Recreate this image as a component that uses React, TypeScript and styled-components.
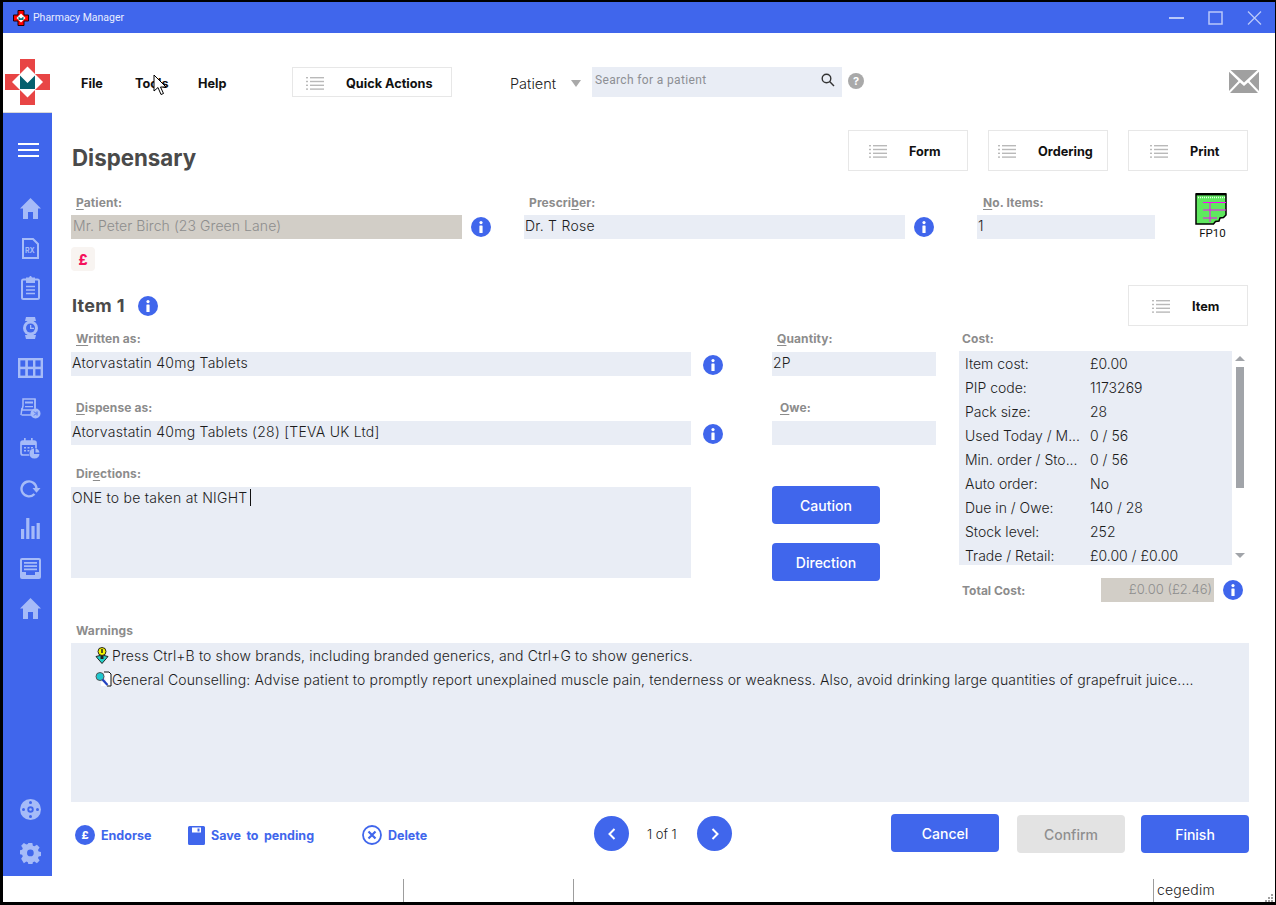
import * as React from 'react';
import styled, { createGlobalStyle } from 'styled-components';

const BLUE = '#4066ec';
const PALE = '#a6bbf8';
const FIELD = '#e9edf5';
const LOCKED = '#d2cec7';

const Global = createGlobalStyle`
  html, body { margin: 0; padding: 0; background: #000; }
  body { font-family: Inter, "Liberation Sans", sans-serif; color: #1a1a1a; }
  * { box-sizing: border-box; }
`;

const Frame = styled.div`
  position: relative;
  width: 1276px;
  height: 905px;
  padding: 2px 1px 3px 3px;
  background: #000;
  overflow: hidden;
`;
const Window = styled.div`
  display: flex;
  flex-direction: column;
  height: 100%;
  background: #fff;
`;
const TitleBar = styled.div`
  display: flex;
  align-items: center;
  height: 31px;
  padding-left: 10px;
  background: ${BLUE};
  flex: none;
`;
const TitleText = styled.span`
  margin-left: 4px;
  font: 10.5px Roboto, sans-serif;
  color: #e8edff;
`;
const WindowControls = styled.div`
  display: flex;
  align-items: center;
  gap: 24px;
  margin-left: auto;
  padding-right: 13px;
  color: #b9c8fa;
`;
const Body = styled.div`
  display: flex;
  flex: 1;
  min-height: 0;
`;
const Side = styled.div`
  display: flex;
  flex-direction: column;
  flex: none;
  width: 49px;
`;
const LogoCell = styled.div`
  display: flex;
  height: 80px;
  padding: 26px 0 0 2px;
  border-bottom: 1px solid #d8d8d8;
  flex: none;
`;
const Nav = styled.div`
  display: flex;
  flex: 1;
  flex-direction: column;
  align-items: center;
  padding: 28px 0 3px 5px;
  background: ${BLUE};
  color: ${PALE};
`;
const NavSlot = styled.div<{ $h?: number }>`
  display: flex;
  align-items: center;
  justify-content: center;
  height: ${p => p.$h ?? 40}px;
  width: 30px;
  flex: none;
`;
const MenuGlyphSlot = styled(NavSlot)`
  margin-left: -3px;
`;
const NavBottom = styled.div`
  display: flex;
  flex-direction: column;
  gap: 4px;
  margin-top: auto;
`;
const Main = styled.div`
  display: flex;
  flex: 1;
  flex-direction: column;
  min-width: 0;
`;
const MenuBar = styled.div`
  display: flex;
  align-items: flex-start;
  height: 80px;
  padding: 34px 16px 0 29px;
  flex: none;
`;
const MenuItem = styled.span<{ $w: number }>`
  width: ${p => p.$w}px;
  font-size: 12.7px;
  font-weight: 700;
  line-height: 34px;
  color: #111;
`;
const OptionButton = styled.div<{ $w: number; $h: number; $gap: number; $pad: number; $push?: boolean }>`
  display: flex;
  align-items: center;
  gap: ${p => p.$gap}px;
  width: ${p => p.$w}px;
  height: ${p => p.$h}px;
  margin-left: ${p => (p.$push ? 'auto' : '0')};
  padding: 2px 0 0 ${p => p.$pad}px;
  border: 1px solid #e7e7e7;
  background: #fff;
  font-size: 12.7px;
  font-weight: 700;
  color: #111;
  flex: none;
`;
const SearchType = styled.div`
  display: flex;
  align-items: center;
  width: 82px;
  height: 30px;
  margin-left: 58px;
  font-size: 14.5px;
  font-weight: 300;
  padding-top: 2px;
  color: #222;
`;
const Caret = styled.span`
  margin-left: 15px;
  border-left: 5px solid transparent;
  border-right: 5px solid transparent;
  border-top: 7px solid #a9a9a9;
`;
const SearchBox = styled.div`
  display: flex;
  justify-content: space-between;
  width: 250px;
  height: 30px;
  padding: 6px 7px 0 3px;
  background: ${FIELD};
  font: 12px Roboto, sans-serif;
  letter-spacing: 0.35px;
  color: #8d8f94;
`;
const HelpDot = styled.span`
  display: flex;
  align-items: center;
  justify-content: center;
  width: 16px;
  height: 16px;
  margin: 6px 0 0 6px;
  border-radius: 50%;
  background: #a9a9a9;
  color: #fff;
  font-size: 11px;
  font-weight: 700;
`;
const Mail = styled.div`
  display: flex;
  margin: 3px 0 0 auto;
`;
const Content = styled.div`
  display: flex;
  flex: 1;
  flex-direction: column;
  padding: 17px 26px 0 19px;
`;
const HeadRow = styled.div`
  display: flex;
  align-items: center;
  gap: 20px;
  margin-right: 1px;
`;
const PageTitle = styled.h1`
  margin: 14px auto 0 1px;
  font-size: 22.3px;
  font-weight: 700;
  line-height: 27px;
  color: #4a4a4a;
`;
const Row = styled.div<{ $mt?: number }>`
  display: flex;
  margin-top: ${p => p.$mt ?? 0}px;
`;
const Field = styled.div<{ $w: number; $ml?: number; $mt?: number }>`
  width: ${p => p.$w}px;
  margin-left: ${p => p.$ml ?? 0}px;
  margin-top: ${p => p.$mt ?? 0}px;
  flex: none;
`;
const Label = styled.div<{ $in?: number; $top?: number }>`
  height: 20px;
  padding: ${p => p.$top ?? 0}px 0 0 ${p => p.$in ?? 5}px;
  font-size: 12px;
  font-weight: 700;
  letter-spacing: 0.1px;
  line-height: 14px;
  color: #8c8c8c;
  u { text-underline-offset: 2px; }
`;
const Input = styled.div<{ $locked?: boolean; $h?: number }>`
  height: ${p => p.$h ?? 24}px;
  padding: 2px 2px 0 ${p => (p.$locked ? 2 : 1)}px;
  background: ${p => (p.$locked ? LOCKED : FIELD)};
  font-size: 14px;
  font-weight: 300;
  letter-spacing: ${p => (p.$locked ? 0.07 : 0.25)}px;
  line-height: 17px;
  color: ${p => (p.$locked ? '#8d8d8d' : '#1c1c1c')};
`;
const CaretMark = styled.span`
  display: inline-block;
  width: 1px;
  height: 17px;
  margin-left: 3px;
  background: #111;
  vertical-align: top;
`;
const Info = styled.span<{ $ml: number; $mt: number }>`
  display: flex;
  align-items: center;
  justify-content: center;
  width: 20px;
  height: 20px;
  margin: ${p => p.$mt}px 0 0 ${p => p.$ml}px;
  border-radius: 50%;
  background: ${BLUE};
  flex: none;
`;
const Form10 = styled.div`
  display: flex;
  flex-direction: column;
  align-items: center;
  width: 32px;
  height: 44px;
  margin: -2px 0 0 40px;
  font: 11.5px/13px Roboto, sans-serif;
  color: #111;
  gap: 2px;
  svg { flex: none; }
`;
const Form10Caption = styled.span`
  margin-left: 3px;
  flex: none;
`;
const Pound = styled.div`
  display: flex;
  align-items: center;
  justify-content: center;
  width: 24px;
  height: 24px;
  margin-top: 8px;
  border-radius: 4px;
  background: #f8f4f1;
  color: #f4115c;
  font-size: 14px;
  font-weight: 800;
`;
const ItemHead = styled.div`
  display: flex;
  align-items: center;
  margin: 14px 1px 0 0;
`;
const ItemTitle = styled.h2`
  margin: 0 0 0 1px;
  font-size: 18px;
  font-weight: 700;
  letter-spacing: 0.3px;
  color: #4a4a4a;
`;
const ItemGrid = styled.div`
  display: flex;
  margin-top: 6px;
`;
const LeftCol = styled.div`
  width: 652px;
  flex: none;
`;
const QtyCol = styled.div`
  width: 164px;
  margin-left: 49px;
  flex: none;
`;
const CostCol = styled.div`
  margin-left: 23px;
  flex: 1;
`;
const ActionButton = styled.button<{ $w: number; $off?: boolean }>`
  display: block;
  width: ${p => p.$w}px;
  height: 38px;
  padding: 0;
  border: 0;
  border-radius: 4px;
  background: ${p => (p.$off ? '#e3e3e3' : BLUE)};
  font-family: Inter, sans-serif;
  font-size: 14px;
  font-weight: 500;
  color: ${p => (p.$off ? '#8f8f8f' : '#fff')};
`;
const StackedActions = styled.div`
  display: flex;
  flex-direction: column;
  gap: 19px;
  margin-top: 41px;
`;
const CostBody = styled.div`
  display: flex;
  margin-top: -1px;
`;
const CostList = styled.div`
  width: 273px;
  height: 214px;
  padding: 1px 0 0 6px;
  background: ${FIELD};
  overflow: hidden;
  flex: none;
`;
const CostRow = styled.div`
  display: flex;
  height: 24px;
  font-size: 14px;
  font-weight: 300;
  line-height: 24px;
  color: #1c1c1c;
`;
const CostKey = styled.span`
  width: 125px;
  flex: none;
`;
const Scrollbar = styled.div`
  display: flex;
  flex-direction: column;
  align-items: center;
  width: 13px;
  margin-left: 1px;
  padding-top: 5px;
`;
const ArrowUp = styled.span`
  border-left: 5px solid transparent;
  border-right: 5px solid transparent;
  border-bottom: 5px solid #a1a4a9;
`;
const ArrowDown = styled.span`
  margin-top: 65px;
  border-left: 5px solid transparent;
  border-right: 5px solid transparent;
  border-top: 5px solid #a1a4a9;
`;
const Thumb = styled.span`
  width: 8px;
  height: 121px;
  margin-top: 6px;
  background: #a1a4a9;
`;
const TotalRow = styled.div`
  display: flex;
  margin-top: 13px;
`;
const TotalLabel = styled.div`
  width: 142px;
  padding: 5px 0 0 3px;
  font-size: 12px;
  font-weight: 700;
  color: #8c8c8c;
`;
const TotalValue = styled.div`
  width: 113px;
  height: 24px;
  padding-right: 2px;
  background: ${LOCKED};
  font-size: 13px;
  font-weight: 300;
  line-height: 23px;
  text-align: right;
  color: #8d8d8d;
`;
const WarningsBlock = styled.div`
  margin-top: 22px;
`;
const WarningsBox = styled.div`
  height: 159px;
  margin-top: -1px;
  padding-left: 21px;
  background: ${FIELD};
`;
const WarningRow = styled.div`
  display: flex;
  align-items: center;
  height: 24px;
  font-size: 14px;
  font-weight: 300;
  letter-spacing: 0.14px;
  color: #1c1c1c;
  white-space: nowrap;
`;
const WarningIcon = styled.span`
  display: flex;
  justify-content: flex-end;
  width: 20px;
  flex: none;
`;
const FooterBar = styled.div`
  display: flex;
  align-items: flex-start;
  margin-top: 12px;
`;
const LinkAction = styled.div<{ $w: number; $ml: number }>`
  display: flex;
  align-items: center;
  gap: 6px;
  width: ${p => p.$w}px;
  height: 20px;
  margin: 11px 0 0 ${p => p.$ml}px;
  font-size: 12.5px;
  font-weight: 700;
  word-spacing: 2.5px;
  color: ${BLUE};
  flex: none;
`;
const Pager = styled.div`
  display: flex;
  align-items: center;
  gap: 18px;
  width: 138px;
  margin: 2px 0 0 0;
  font-size: 13px;
  font-weight: 300;
  flex: none;
`;
const PagerDot = styled.span`
  display: flex;
  align-items: center;
  justify-content: center;
  width: 35px;
  height: 35px;
  border-radius: 50%;
  background: ${BLUE};
  flex: none;
`;
const PagerText = styled.span`
  width: 32px;
  white-space: nowrap;
`;
const FooterButtons = styled.div`
  display: flex;
  gap: 18px;
  margin-left: auto;
  & > :last-child { margin-left: -2px; }
  & > :not(:first-child) { margin-top: 1px; }
`;
const StatusBar = styled.div`
  display: flex;
  height: 26px;
  padding-top: 3px;
  flex: none;
`;
const StatusCell = styled.div<{ $w: number }>`
  width: ${p => p.$w}px;
  height: 100%;
  border-right: 1px solid #9d9d9d;
  flex: none;
`;
const StatusEnd = styled.div`
  padding-left: 3px;
  font-size: 14px;
  font-weight: 300;
  line-height: 21px;
  letter-spacing: 0.2px;
`;
const Grip = styled.svg`
  position: absolute;
  right: 3px;
  bottom: 3px;
`;
const Cursor = styled.svg`
  position: absolute;
  left: 153px;
  top: 74px;
`;

const ListGlyph = () => (
  <svg width="18" height="13" viewBox="0 0 18 13" fill="#b9b9b9">
    <rect x="0" y="0" width="2" height="1.4" />
    <rect x="4" y="0" width="14" height="1.4" />
    <rect x="0" y="3.8" width="2" height="1.4" />
    <rect x="4" y="3.8" width="14" height="1.4" />
    <rect x="0" y="7.6" width="2" height="1.4" />
    <rect x="4" y="7.6" width="14" height="1.4" />
    <rect x="0" y="11.4" width="2" height="1.4" />
    <rect x="4" y="11.4" width="14" height="1.4" />
  </svg>
);

const InfoGlyph = () => (
  <svg width="4" height="12" viewBox="0 0 4 12" fill="#fff">
    <circle cx="2" cy="1.6" r="1.6" />
    <rect x="0.4" y="4.4" width="3.2" height="7.6" rx="0.6" />
  </svg>
);

const Logo = () => (
  <svg width="46" height="46" viewBox="0 0 46 46">
    <path d="M15 0h15v15h15v16H30v15H15V31H0V15h15z" fill="#e84545" />
    <path d="M22.500 7.500 38 23 22.500 38.500 7 23z" fill="#fff" />
    <path d="M15 16.500 22.500 24 30 16.500V30H15z" fill="#04606e" />
  </svg>
);

const TinyLogo = () => (
  <svg width="16" height="16" viewBox="0 0 16 16">
    <path d="M5 .5h6v4.500h4.500v6H11v4.500H5V11H.5V5H5z" fill="#f00" stroke="#200" />
    <path d="M8 3.500 12.500 8 8 12.500 3.500 8z" fill="#fff" />
    <path d="M5.500 6.500 8 8.500l2.500-2V10h-5z" fill="#0a7a80" />
  </svg>
);

const icons: React.ReactNode[] = [
  <svg key="home" width="21" height="21" viewBox="0 0 21 21" fill="currentColor">
    <path d="M10.500 0 21 10.500h-3V21h-5v-7H8v7H3V10.500H0z" />
  </svg>,
  <svg key="rx" width="17" height="21" viewBox="0 0 17 21" fill="none" stroke="currentColor" strokeWidth="2">
    <path d="M1 1h10l5 5v14H1z" />
    <text x="3" y="15" fontSize="7" fontWeight="700" fontFamily="Inter" fill="currentColor" stroke="none">RX</text>
  </svg>,
  <svg key="clip" width="19" height="24" viewBox="0 0 19 24" fill="none" stroke="currentColor" strokeWidth="2">
    <rect x="1" y="3.500" width="17" height="19.500" rx="1.500" />
    <path d="M6 4V2.500h2.500L9.500 1l1 1.500H13V6H6z" fill="currentColor" />
    <path d="M5 10.500h9M5 14h9M5 17.500h9" strokeWidth="1.600" />
  </svg>,
  <svg key="watch" width="15" height="22" viewBox="0 0 15 22" fill="currentColor">
    <path d="M3 0h9l1 4H2zM2 18h11l-1 4H3z" />
    <circle cx="7.500" cy="11" r="7.500" />
    <circle cx="7.500" cy="11" r="4.500" fill={BLUE} />
    <path d="M7 8h1.300v2.800H11V12H7z" />
  </svg>,
  <svg key="grid" width="25" height="20" viewBox="0 0 25 20" fill={BLUE} stroke="currentColor" strokeWidth="2.400">
    <rect x="1.200" y="1.200" width="7.500" height="8.800" />
    <rect x="8.700" y="1.200" width="7.500" height="8.800" />
    <rect x="16.200" y="1.200" width="7.600" height="8.800" />
    <rect x="1.200" y="10" width="7.500" height="8.800" />
    <rect x="8.700" y="10" width="7.500" height="8.800" />
    <rect x="16.200" y="10" width="7.600" height="8.800" />
  </svg>,
  <svg key="ord" width="21" height="21" viewBox="0 0 21 21">
    <path d="M3 1h12v11H2l1-4zM1.500 17h10" fill="none" stroke="currentColor" strokeWidth="1.500" />
    <path d="M5 3.500h8v2H5zM2 16.500V10M5 8h8v1.300H5z" fill="currentColor" />
    <path d="M1 17 2 10" stroke="currentColor" strokeWidth="1.500" />
    <path d="M15 1v9" stroke="currentColor" strokeWidth="1.500" />
    <circle cx="15.500" cy="15.500" r="5" fill="currentColor" />
    <path d="M14 13.500 16 15.500 14 17.500M17 13.500v4" fill="none" stroke={BLUE} strokeWidth="1" />
  </svg>,
  <svg key="cal" width="20" height="21" viewBox="0 0 20 21">
    <rect x="1" y="3" width="15" height="14" rx="2" fill="none" stroke="currentColor" strokeWidth="1.700" />
    <path d="M1 3h15v4H1zM4 0h1.700v4H4zM11 0h1.700v4H11zM4 9h2v1.500H4zM7.500 9h2v1.500h-2zM11 9h2v1.500h-2zM4 12h2v1.500H4zM7.500 12h2v1.500h-2z" fill="currentColor" />
    <circle cx="14.500" cy="15.500" r="5.500" fill={BLUE} />
    <path d="M14 10.500V16h5.500A5 5 0 1 1 14 10.500z" fill="currentColor" />
    <path d="M15.500 10.500a5 5 0 0 1 4 4h-4z" fill="currentColor" />
  </svg>,
  <svg key="cycle" width="21" height="19" viewBox="0 0 21 19" fill="none">
    <path d="M16.500 9.500A7.500 7.500 0 1 0 14.500 15" stroke="currentColor" strokeWidth="2.400" />
    <path d="M12.500 9h8l-4 4.800z" fill="currentColor" />
  </svg>,
  <svg key="bars" width="19" height="21" viewBox="0 0 19 21" fill="currentColor">
    <rect x="0" y="11" width="3.200" height="10" />
    <rect x="5.200" y="0" width="3.200" height="21" />
    <rect x="10.400" y="8" width="3.200" height="13" />
    <rect x="15.600" y="5" width="3.200" height="16" />
  </svg>,
  <svg key="inbox" width="21" height="21" viewBox="0 0 21 21" fill="currentColor">
    <path d="M2 0h17a2 2 0 0 1 2 2v17a2 2 0 0 1-2 2H2a2 2 0 0 1-2-2V2a2 2 0 0 1 2-2zm0 2v12h4v3h9v-3h4V2z" />
    <path d="M4 4h13v1.800H4zM4 7.200h13V9H4zM4 10.400h13v1.800H4z" />
  </svg>,
  <svg key="home2" width="21" height="21" viewBox="0 0 21 21" fill="currentColor">
    <path d="M10.500 0 21 10.500h-3V21h-5v-7H8v7H3V10.500H0z" />
  </svg>,
];

const costs: [string, string][] = [
  ['Item cost:', '£0.00'],
  ['PIP code:', '1173269'],
  ['Pack size:', '28'],
  ['Used Today / M...', '0 / 56'],
  ['Min. order / Sto...', '0 / 56'],
  ['Auto order:', 'No'],
  ['Due in / Owe:', '140 / 28'],
  ['Stock level:', '252'],
  ['Trade / Retail:', '£0.00 / £0.00'],
];

export default function App() {
  return (
    <Frame>
      <Global />
      <Window>
        <TitleBar>
          <TinyLogo />
          <TitleText>Pharmacy Manager</TitleText>
          <WindowControls>
            <svg width="15" height="2" viewBox="0 0 15 2"><rect width="15" height="2" fill="currentColor" /></svg>
            <svg width="15" height="14" viewBox="0 0 15 14" fill="none" stroke="currentColor" strokeWidth="1.500"><rect x="1" y="1" width="13" height="12" /></svg>
            <svg width="15" height="14" viewBox="0 0 15 14" fill="none" stroke="currentColor" strokeWidth="1.300"><path d="M1 0.500 14 13.500M14 0.500 1 13.500" /></svg>
          </WindowControls>
        </TitleBar>
        <Body>
          <Side>
            <LogoCell><Logo /></LogoCell>
            <Nav>
              <MenuGlyphSlot $h={18}>
                <svg width="21" height="15" viewBox="0 0 21 15" fill="#fff">
                  <rect width="21" height="2" y="0" />
                  <rect width="21" height="2" y="6" />
                  <rect width="21" height="2" y="12" />
                </svg>
              </MenuGlyphSlot>
              <NavSlot $h={29} />
              {icons.map(icon => (
                <NavSlot key={(icon as React.ReactElement).key}>{icon}</NavSlot>
              ))}
              <NavBottom>
                <NavSlot>
                  <svg width="21" height="21" viewBox="0 0 21 21">
                    <circle cx="10.500" cy="10.500" r="10.500" fill="currentColor" />
                    <circle cx="10.500" cy="10.500" r="3.200" fill={BLUE} />
                    <circle cx="10.500" cy="10.500" r="1.300" fill="currentColor" />
                    <circle cx="10.500" cy="3.500" r="1.500" fill={BLUE} />
                    <circle cx="10.500" cy="17.500" r="1.500" fill={BLUE} />
                    <circle cx="3.500" cy="10.500" r="1.500" fill={BLUE} />
                    <circle cx="17.500" cy="10.500" r="1.500" fill={BLUE} />
                  </svg>
                </NavSlot>
                <NavSlot>
                  <svg width="21" height="21" viewBox="0 0 21 21" fill="currentColor">
                    <path fillRule="evenodd" d="M8.500 0h4l.6 3 1.600.7L17.300 2l2.800 2.800-1.700 2.600.7 1.600 2.900.6v4l-2.900.6-.7 1.600 1.700 2.600-2.800 2.800-2.600-1.700-1.600.7-.6 2.900h-4l-.6-2.900-1.600-.7-2.600 1.700L.9 16.600l1.700-2.600-.7-1.600L-1 11.800v-4l2.900-.6.7-1.600L.9 3 3.700.2l2.600 1.700L7.900 1.200zM10.500 7a3.500 3.500 0 1 0 0 7 3.500 3.500 0 0 0 0-7z" transform="translate(0.300 -0.200) scale(0.96)" />
                  </svg>
                </NavSlot>
              </NavBottom>
            </Nav>
          </Side>
          <Main>
            <MenuBar>
              <MenuItem $w={54}>File</MenuItem>
              <MenuItem $w={63}>Tools</MenuItem>
              <MenuItem $w={94}>Help</MenuItem>
              <OptionButton $w={160} $h={30} $gap={22} $pad={13}>
                <ListGlyph />
                Quick Actions
              </OptionButton>
              <SearchType>
                Patient
                <Caret />
              </SearchType>
              <SearchBox>
                Search for a patient
                <svg width="14" height="14" viewBox="0 0 14 14" fill="none" stroke="#333" strokeWidth="1.400">
                  <circle cx="5.500" cy="5.500" r="4.300" />
                  <path d="M8.600 8.600 13 13" />
                </svg>
              </SearchBox>
              <HelpDot>?</HelpDot>
              <Mail>
                <svg width="30" height="24" viewBox="0 0 30 24" fill="#a0a0a0">
                  <path d="M1.500 0h27L15 12.500zM0 1.800 9.500 11 0 21zM30 1.800 20.500 11 30 21zM11 12.500 15 16l4-3.500L29 23H1z" />
                </svg>
              </Mail>
            </MenuBar>
            <Content>
              <HeadRow>
                <PageTitle>Dispensary</PageTitle>
                <OptionButton $w={120} $h={41} $gap={22} $pad={20}><ListGlyph />Form</OptionButton>
                <OptionButton $w={120} $h={41} $gap={22} $pad={9}><ListGlyph />Ordering</OptionButton>
                <OptionButton $w={120} $h={41} $gap={22} $pad={21}><ListGlyph />Print</OptionButton>
              </HeadRow>
              <Row $mt={24}>
                <Field $w={391}>
                  <Label $top={1}><u>P</u>atient:</Label>
                  <Input $locked>Mr. Peter Birch (23 Green Lane)</Input>
                </Field>
                <Info $ml={9} $mt={22}><InfoGlyph /></Info>
                <Field $w={381} $ml={33}>
                  <Label $top={1}>Prescri<u>b</u>er:</Label>
                  <Input>Dr. T Rose</Input>
                </Field>
                <Info $ml={9} $mt={22}><InfoGlyph /></Info>
                <Field $w={178} $ml={43}>
                  <Label $in={6} $top={1}><u>N</u>o. Items:</Label>
                  <Input>1</Input>
                </Field>
                <Form10>
                  <svg width="32" height="32" viewBox="0 0 32 32">
                    <path d="M1 1h30v21l-2.500 2.500-3.500.5-1 3-3.500.5-2 2.500H1z" fill="#5fe85f" stroke="#000" strokeWidth="1.500" />
                    <path d="M1 1.200h30" stroke="#000" strokeWidth="2.400" />
                    <path d="M3 4.500h27" stroke="#e6ffe6" strokeWidth="1.500" strokeDasharray="1 1" />
                    <path d="M8 9.500h23M8 17h23M8 25h14M15 9.500V29" stroke="#f0f" strokeWidth="1" />
                  </svg>
                  <Form10Caption>FP10</Form10Caption>
                </Form10>
              </Row>
              <Pound>£</Pound>
              <ItemHead>
                <ItemTitle>Item 1</ItemTitle>
                <Info $ml={13} $mt={0}><InfoGlyph /></Info>
                <OptionButton $w={120} $h={41} $gap={22} $pad={23} $push>
                  <ListGlyph />Item
                </OptionButton>
              </ItemHead>
              <ItemGrid>
                <LeftCol>
                  <Row>
                    <Field $w={620}>
                      <Label><u>W</u>ritten as:</Label>
                      <Input>Atorvastatin 40mg Tablets</Input>
                    </Field>
                    <Info $ml={12} $mt={23}><InfoGlyph /></Info>
                  </Row>
                  <Row $mt={25}>
                    <Field $w={620}>
                      <Label><u>D</u>ispense as:</Label>
                      <Input>Atorvastatin 40mg Tablets (28) [TEVA UK Ltd]</Input>
                    </Field>
                    <Info $ml={12} $mt={23}><InfoGlyph /></Info>
                  </Row>
                  <Field $w={620} $mt={22}>
                    <Label>Dir<u>e</u>ctions:</Label>
                    <Input $h={91}>ONE to be taken at NIGHT<CaretMark /></Input>
                  </Field>
                </LeftCol>
                <QtyCol>
                  <Field $w={164}>
                    <Label><u>Q</u>uantity:</Label>
                    <Input>2P</Input>
                  </Field>
                  <Field $w={164} $mt={25}>
                    <Label $in={8}><u>O</u>we:</Label>
                    <Input />
                  </Field>
                  <StackedActions>
                    <ActionButton $w={108}>Caution</ActionButton>
                    <ActionButton $w={108}>Direction</ActionButton>
                  </StackedActions>
                </QtyCol>
                <CostCol>
                  <Label $in={3}>Cost:</Label>
                  <CostBody>
                    <CostList>
                      {costs.map(([k, v]) => (
                        <CostRow key={k}><CostKey>{k}</CostKey>{v}</CostRow>
                      ))}
                    </CostList>
                    <Scrollbar>
                      <ArrowUp />
                      <Thumb />
                      <ArrowDown />
                    </Scrollbar>
                  </CostBody>
                  <TotalRow>
                    <TotalLabel>Total Cost:</TotalLabel>
                    <TotalValue>£0.00 (£2.46)</TotalValue>
                    <Info $ml={9} $mt={2}><InfoGlyph /></Info>
                  </TotalRow>
                </CostCol>
              </ItemGrid>
              <WarningsBlock>
                <Label>Warnings</Label>
                <WarningsBox>
                  <WarningRow>
                    <WarningIcon>
                      <svg width="17" height="17" viewBox="0 0 17 17">
                        <path d="M1 9.500 7 8l6 1.500-6 7z" fill="#25d0c8" stroke="#222" strokeWidth="1" />
                        <circle cx="7" cy="4.500" r="4" fill="#f6f600" stroke="#222" />
                        <path d="M7 2v4" stroke="#222" strokeWidth="1.500" />
                        <path d="M5.500 9h3v3h-3z" fill="#222" />
                      </svg>
                    </WarningIcon>
                    Press Ctrl+B to show brands, including branded generics, and Ctrl+G to show generics.
                  </WarningRow>
                  <WarningRow>
                    <WarningIcon>
                      <svg width="17" height="16" viewBox="0 0 17 16">
                        <path d="M9 1h5l2 2v12h-4" fill="#fff" stroke="#111" />
                        <path d="M6 11h6v4H6z" fill="#fff" />
                        <circle cx="5" cy="5.500" r="4" fill="#1fc8d0" stroke="#555" />
                        <path d="M7.500 8.500 12.500 14" stroke="#2040c0" strokeWidth="2.200" />
                      </svg>
                    </WarningIcon>
                    General Counselling: Advise patient to promptly report unexplained muscle pain, tenderness or weakness. Also, avoid drinking large quantities of grapefruit juice....
                  </WarningRow>
                </WarningsBox>
              </WarningsBlock>
              <FooterBar>
                <LinkAction $w={113} $ml={4}>
                  <svg width="20" height="20" viewBox="0 0 20 20">
                    <circle cx="10" cy="10" r="10" fill={BLUE} />
                    <text x="10" y="14" textAnchor="middle" fontSize="11" fontWeight="800" fontFamily="Inter" fill="#fff">£</text>
                  </svg>
                  Endorse
                </LinkAction>
                <LinkAction $w={174} $ml={0}>
                  <svg width="17" height="19" viewBox="0 0 17 19">
                    <path d="M1.500 0h14A1.500 1.500 0 0 1 17 1.500v16a1.500 1.500 0 0 1-1.500 1.500h-14A1.500 1.500 0 0 1 0 17.500v-16A1.500 1.500 0 0 1 1.500 0z" fill={BLUE} />
                    <rect x="4" y="1.500" width="9" height="5" fill="#fff" />
                    <rect x="9.500" y="2.500" width="2" height="3" fill={BLUE} />
                  </svg>
                  Save to pending
                </LinkAction>
                <LinkAction $w={232} $ml={0}>
                  <svg width="20" height="20" viewBox="0 0 20 20" fill="none" stroke={BLUE}>
                    <circle cx="10" cy="10" r="9" strokeWidth="1.800" />
                    <path d="M6.500 6.500 13.500 13.500M13.500 6.500 6.500 13.500" strokeWidth="2.200" />
                  </svg>
                  Delete
                </LinkAction>
                <Pager>
                  <PagerDot>
                    <svg width="8" height="12" viewBox="0 0 8 12" fill="none" stroke="#fff" strokeWidth="2"><path d="M6.500 1 1.500 6l5 5" /></svg>
                  </PagerDot>
                  <PagerText>1 of 1</PagerText>
                  <PagerDot>
                    <svg width="8" height="12" viewBox="0 0 8 12" fill="none" stroke="#fff" strokeWidth="2"><path d="M1.500 1l5 5-5 5" /></svg>
                  </PagerDot>
                </Pager>
                <FooterButtons>
                  <ActionButton $w={108}>Cancel</ActionButton>
                  <ActionButton $w={108} $off>Confirm</ActionButton>
                  <ActionButton $w={108}>Finish</ActionButton>
                </FooterButtons>
              </FooterBar>
            </Content>
          </Main>
        </Body>
        <StatusBar>
          <StatusCell $w={401} />
          <StatusCell $w={170} />
          <StatusCell $w={580} />
          <StatusEnd>cegedim</StatusEnd>
        </StatusBar>
      </Window>
      <Grip width="8" height="8" viewBox="0 0 8 8" fill="#a0a0a0">
        <rect x="6" y="0" width="2" height="2" />
        <rect x="3" y="3" width="2" height="2" />
        <rect x="6" y="3" width="2" height="2" />
        <rect x="0" y="6" width="2" height="2" />
        <rect x="3" y="6" width="2" height="2" />
        <rect x="6" y="6" width="2" height="2" />
      </Grip>
      <Cursor width="14" height="22" viewBox="0 0 14 22">
        <path d="M1 1v16l4-3.500 3 7 2.500-1-3-6.500H13z" fill="#fff" stroke="#000" strokeWidth="1" />
      </Cursor>
    </Frame>
  );
}
